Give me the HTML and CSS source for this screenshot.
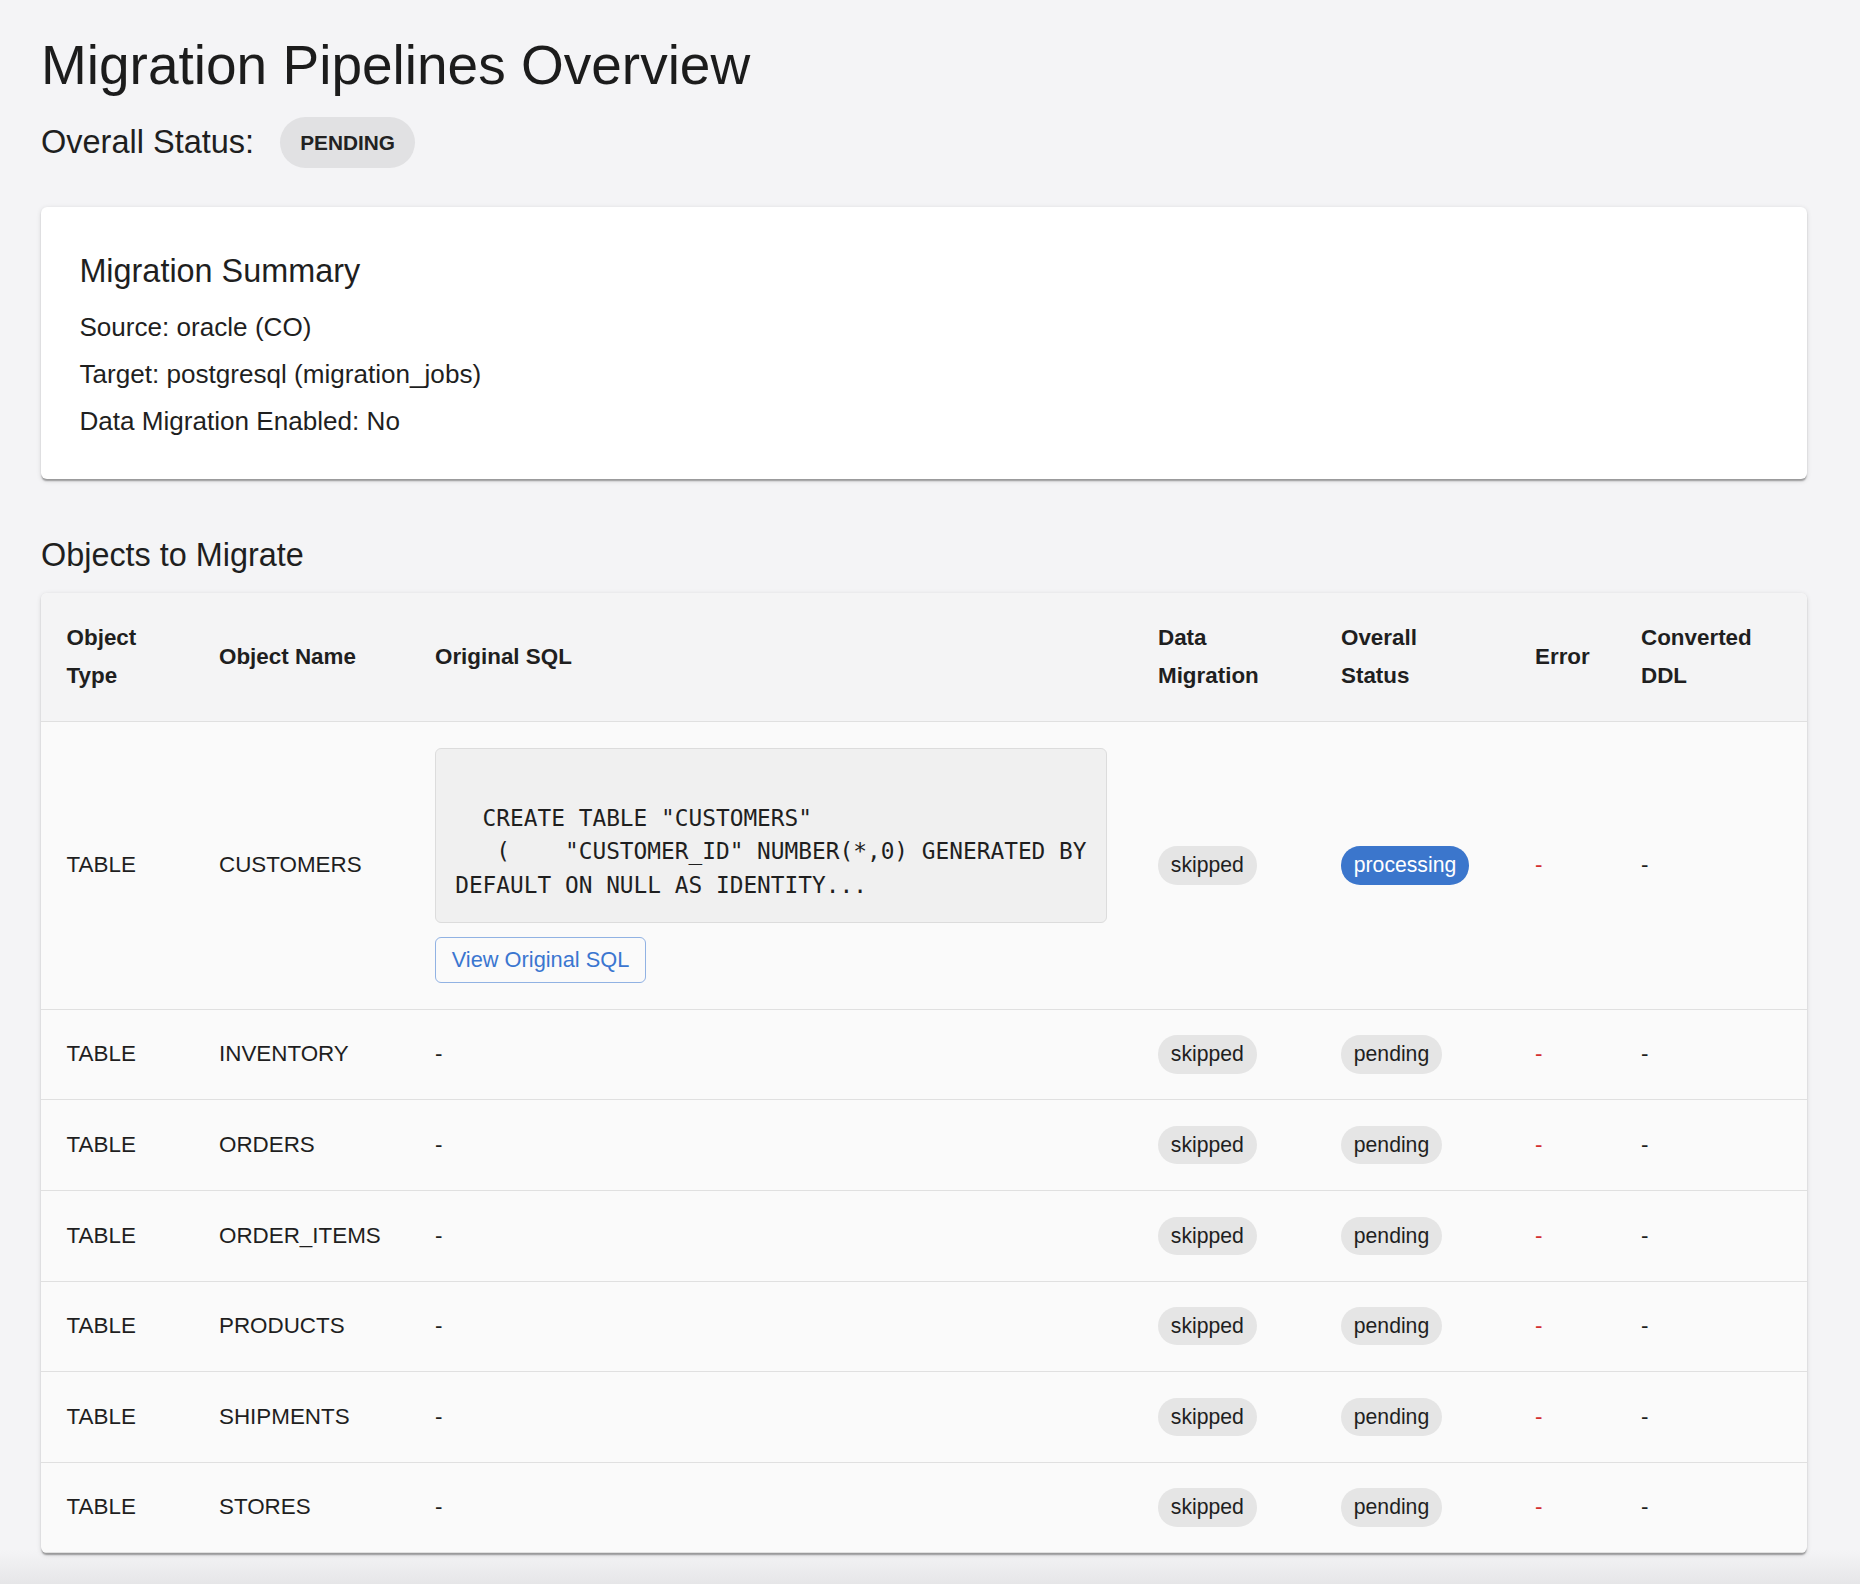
FILE: index.html
```html
<!DOCTYPE html>
<html lang="en">
<head>
<meta charset="utf-8">
<title>Migration Pipelines Overview</title>
<link rel="stylesheet" href="styles.css">
</head>
<body>
<main class="page">
  <h1 class="page-title">Migration Pipelines Overview</h1>
  <div class="status-row">
    <span class="status-label">Overall Status:</span>
    <span class="status-chip">PENDING</span>
  </div>

  <section class="summary-card">
    <h2 class="summary-title">Migration Summary</h2>
    <div class="summary-lines">
      <p class="summary-line">Source: oracle (CO)</p>
      <p class="summary-line">Target: postgresql (migration_jobs)</p>
      <p class="summary-line">Data Migration Enabled: No</p>
    </div>
  </section>

  <h2 class="section-title">Objects to Migrate</h2>
  <div class="table-card">
    <table class="objects">
      <colgroup>
        <col class="c-type"><col class="c-name"><col class="c-sql"><col class="c-data"><col class="c-status"><col class="c-error"><col class="c-ddl">
      </colgroup>
      <thead>
        <tr>
          <th>Object Type</th>
          <th>Object Name</th>
          <th>Original SQL</th>
          <th>Data Migration</th>
          <th>Overall Status</th>
          <th>Error</th>
          <th>Converted DDL</th>
        </tr>
      </thead>
      <tbody>
        <tr>
          <td>TABLE</td>
          <td>CUSTOMERS</td>
          <td>
            <div class="code">
  CREATE TABLE "CUSTOMERS"
   (    "CUSTOMER_ID" NUMBER(*,0) GENERATED BY
DEFAULT ON NULL AS IDENTITY...</div>
            <button class="view-btn" type="button">View Original SQL</button>
          </td>
          <td><span class="chip">skipped</span></td>
          <td><span class="chip chip-blue">processing</span></td>
          <td class="err">-</td>
          <td>-</td>
        </tr>
        <tr>
          <td>TABLE</td><td>INVENTORY</td><td>-</td>
          <td><span class="chip">skipped</span></td>
          <td><span class="chip">pending</span></td>
          <td class="err">-</td><td>-</td>
        </tr>
        <tr>
          <td>TABLE</td><td>ORDERS</td><td>-</td>
          <td><span class="chip">skipped</span></td>
          <td><span class="chip">pending</span></td>
          <td class="err">-</td><td>-</td>
        </tr>
        <tr>
          <td>TABLE</td><td>ORDER_ITEMS</td><td>-</td>
          <td><span class="chip">skipped</span></td>
          <td><span class="chip">pending</span></td>
          <td class="err">-</td><td>-</td>
        </tr>
        <tr>
          <td>TABLE</td><td>PRODUCTS</td><td>-</td>
          <td><span class="chip">skipped</span></td>
          <td><span class="chip">pending</span></td>
          <td class="err">-</td><td>-</td>
        </tr>
        <tr>
          <td>TABLE</td><td>SHIPMENTS</td><td>-</td>
          <td><span class="chip">skipped</span></td>
          <td><span class="chip">pending</span></td>
          <td class="err">-</td><td>-</td>
        </tr>
        <tr>
          <td>TABLE</td><td>STORES</td><td>-</td>
          <td><span class="chip">skipped</span></td>
          <td><span class="chip">pending</span></td>
          <td class="err">-</td><td>-</td>
        </tr>
      </tbody>
    </table>
  </div>
</main>
</body>
</html>
```

FILE: styles.css
```css
html {
  background: #f4f4f6;
}

body {
  margin: 0;
  min-height: 100vh;
  font-family: "Liberation Sans", Arial, Helvetica, sans-serif;
  color: #1f1f1f;
  background: linear-gradient(to bottom, #f4f4f6 0, #f4f4f6 calc(100% - 34px), #e6e6e8 100%);
}

.page {
  padding: 32px 53px 24px 41px;
}

.page-title {
  margin: 0 0 18px;
  font-size: 55px;
  line-height: 67.2px;
  font-weight: 400;
  color: #1c1c1c;
}

.status-row {
  display: flex;
  align-items: center;
  gap: 26px;
}

.status-label {
  font-size: 32.5px;
  line-height: 51.2px;
  color: #1f1f1f;
}

.status-chip {
  display: inline-flex;
  align-items: center;
  height: 51px;
  padding: 0 20px;
  border-radius: 26px;
  background: #e1e1e3;
  font-size: 20.8px;
  font-weight: 700;
  color: #222;
}

.summary-card {
  margin-top: 38.8px;
  background: #ffffff;
  border-radius: 6px;
  padding: 38.4px;
  box-shadow: 0 3.2px 1.6px -1.6px rgba(0, 0, 0, 0.2), 0 1.6px 1.6px 0 rgba(0, 0, 0, 0.14), 0 1.6px 4.8px 0 rgba(0, 0, 0, 0.12);
}

.summary-title {
  margin: 0 0 11.3px;
  font-size: 32.4px;
  line-height: 51.2px;
  font-weight: 400;
  color: #1f1f1f;
}

.summary-lines {
  display: flex;
  flex-direction: column;
  gap: 8.6px;
}

.summary-line {
  margin: 0;
  font-size: 26.1px;
  line-height: 38.4px;
  color: #1f1f1f;
}

.section-title {
  margin: 51.6px 0 11.5px;
  font-size: 32.4px;
  line-height: 51.2px;
  font-weight: 400;
  color: #1f1f1f;
}

.table-card {
  background: #fafafa;
  border-radius: 6px;
  overflow: hidden;
  box-shadow: 0 3.2px 1.6px -1.6px rgba(0, 0, 0, 0.2), 0 1.6px 1.6px 0 rgba(0, 0, 0, 0.14), 0 1.6px 4.8px 0 rgba(0, 0, 0, 0.12);
}

.objects {
  width: 100%;
  table-layout: fixed;
  border-collapse: collapse;
  font-size: 22.4px;
  color: #1f1f1f;
}

.c-type { width: 152.4px; }
.c-name { width: 216px; }
.c-sql { width: 723px; }
.c-data { width: 183px; }
.c-status { width: 194px; }
.c-error { width: 106px; }
.c-ddl { width: 192.3px; }

.objects th {
  background: #f4f4f5;
  text-align: left;
  font-weight: 700;
  line-height: 38.4px;
  padding: 25.6px;
  vertical-align: middle;
  border-bottom: 1px solid #e0e0e0;
  color: #1f1f1f;
}

.objects td {
  line-height: 38.4px;
  padding: 25.6px;
  vertical-align: middle;
  border-bottom: 1px solid #e0e0e0;
  text-align: left;
}

.objects td.err {
  color: #d32f2f;
}

.code {
  white-space: pre;
  overflow: hidden;
  font-family: "DejaVu Sans Mono", "Liberation Mono", monospace;
  font-size: 22.8px;
  line-height: 33.6px;
  padding: 19.2px;
  background: #f0f0f0;
  border: 1px solid #dcdcdc;
  border-radius: 6px;
  color: #1f1f1f;
}

.view-btn {
  display: inline-block;
  margin-top: 14px;
  padding: 4px 15.7px;
  font-family: "Liberation Sans", Arial, Helvetica, sans-serif;
  font-size: 21.8px;
  line-height: 36.6px;
  color: #3a76d0;
  background: transparent;
  border: 1px solid rgba(58, 118, 208, 0.55);
  border-radius: 6px;
  cursor: pointer;
}

.chip {
  display: inline-flex;
  align-items: center;
  vertical-align: top;
  height: 38.4px;
  padding: 0 12.8px;
  border-radius: 19.2px;
  background: #e5e5e5;
  color: #1f1f1f;
  font-size: 21.2px;
  line-height: 38.4px;
}

.chip-blue {
  background: #3b76cc;
  color: #ffffff;
}
```
